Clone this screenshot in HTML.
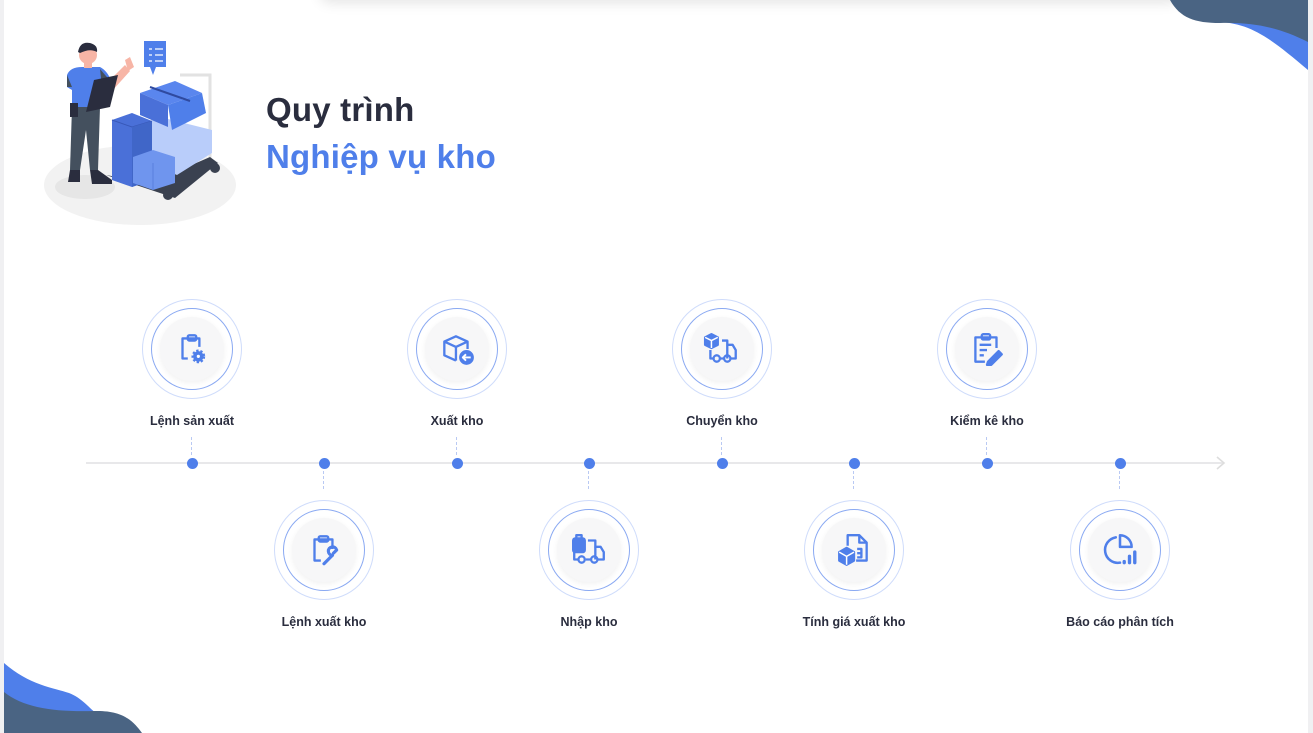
<!DOCTYPE html>
<html><head><meta charset="utf-8"><style>
html,body{margin:0;padding:0}
body{width:1313px;height:733px;position:relative;overflow:hidden;background:#fff;font-family:"Liberation Sans",sans-serif}
.edgeL{position:absolute;left:0;top:0;width:4px;height:733px;background:#f0f0f2}
.edgeR{position:absolute;right:0;top:0;width:5px;height:733px;background:#f0f0f2}
.topsh{position:absolute;left:320px;top:-20px;width:860px;height:20px;box-shadow:0 2px 14px rgba(0,0,0,.12);border-radius:10px}
.t1{position:absolute;left:266px;top:91px;font-size:33px;font-weight:bold;color:#2a2d3e;letter-spacing:0.2px}
.t2{position:absolute;left:266px;top:138px;font-size:33px;font-weight:bold;color:#4f7fea;letter-spacing:0.2px}
.node{position:absolute;width:100px;height:100px;margin-left:-50px;margin-top:-50px}
.node .o{position:absolute;left:0;top:0;width:98px;height:98px;border-radius:50%;border:1px solid #cfdcfb}
.node .m{position:absolute;left:9px;top:9px;width:80px;height:80px;border-radius:50%;border:1px solid #8aa9f2;background:#fff}
.node .i{position:absolute;left:18px;top:18px;width:64px;height:64px;border-radius:50%;background:#f7f7f8;box-shadow:0 2px 6px rgba(0,0,0,.06)}
.node svg{position:absolute;left:31px;top:31px;width:38px;height:38px}
.lbl{position:absolute;width:200px;margin-left:-100px;text-align:center;font-size:12.5px;font-weight:bold;color:#2a2d3e}
.dot{position:absolute;width:11px;height:11px;border-radius:50%;background:#4f7fea;margin-left:-5.5px;margin-top:-5.5px}
.dash{position:absolute;width:0;border-left:1px dashed #b9c9f3;height:18px}
</style></head><body>
<div class="edgeL"></div><div class="edgeR"></div><div class="topsh"></div>
<svg style="position:absolute;left:1160px;top:0" width="148" height="75" viewBox="0 0 148 75">
<path d="M55 22 C90 22 110 38 148 70 L148 0 L60 0 Z" fill="#4f7fea"/>
<path d="M10 0 C20 18 35 23 60 23 C95 22 120 28 148 42 L148 0 Z" fill="#4a6483"/>
</svg>
<svg style="position:absolute;left:4px;top:660px" width="145" height="73" viewBox="0 0 145 73">
<path d="M0 3 C25 25 50 28 65 33 C78 38 85 48 92 53 L0 73 Z" fill="#4f7fea"/>
<path d="M0 32 C20 48 50 52 90 51 C120 50 130 62 138 73 L0 73 Z" fill="#4a6483"/>
</svg>
<!-- illustration -->
<svg style="position:absolute;left:40px;top:35px" width="200" height="195" viewBox="0 0 200 195">
<ellipse cx="100" cy="150" rx="96" ry="40" fill="#f2f2f2"/>
<ellipse cx="45" cy="152" rx="30" ry="12" fill="#e6e6e6"/>
<path d="M140 40 h30 v88" stroke="#e2e2e2" stroke-width="3" fill="none"/>
<path d="M66 140 L135 163 L178 128 L170 122 L110 148 Z" fill="#3a4150"/>
<circle cx="128" cy="160" r="5" fill="#3a4150"/><circle cx="175" cy="133" r="5" fill="#3a4150"/>
<!-- boxes -->
<path d="M112 80 L172 95 L172 118 L137 140 L112 130 Z" fill="#b9cdfa"/>
<path d="M100 58 L135 46 L162 58 L128 70 Z" fill="#5a86ee"/>
<path d="M100 58 L128 70 L128 92 L100 80 Z" fill="#4a70d8"/>
<path d="M128 70 L162 58 L166 78 L132 95 Z" fill="#4f7fea"/>
<path d="M110 52 L150 66" stroke="#2f4aa0" stroke-width="2"/>
<path d="M72 85 L92 78 L112 86 L112 145 L92 152 L72 145 Z" fill="#4a70d8"/>
<path d="M72 85 L92 92 L112 86" stroke="#3858b8" stroke-width="1" fill="none"/>
<path d="M92 92 V152 L112 145 V86 Z" fill="#4066c8"/>
<path d="M93 122 L113 115 L135 122 L135 148 L113 155 L93 148 Z" fill="#6f95ee"/>
<path d="M113 128 V155" stroke="#5a80dd"/>
<rect x="104" y="6" width="22" height="26" fill="#4f7fea"/><path d="M110 32 L113 40 L116 32 Z" fill="#4f7fea"/>
<path d="M109 14 h3 M115 14 h8 M109 20 h3 M115 20 h8 M109 26 h3 M115 26 h8" stroke="#fff" stroke-width="1.2"/>
<!-- person -->
<path d="M32 72 L60 72 L58 135 L50 135 L46 95 L40 135 L30 135 Z" fill="#44505e"/>
<path d="M30 135 h10 v12 h-12z M50 135 h8 l14 10 v4 h-20z" fill="#2a2d3e"/>
<path d="M27 40 Q30 32 42 32 L60 32 Q68 36 72 48 L60 52 L60 72 L32 72 L32 55 L27 52 Z" fill="#4f7fea"/>
<path d="M27 40 L27 52 L32 52 Z M60 34 L72 48 L62 52 Z" fill="#44505e"/>
<circle cx="48" cy="20" r="9" fill="#f7b5a6"/><path d="M38 17 Q40 6 50 8 Q58 10 57 17 Q50 13 40 18 Z" fill="#2a2d3e"/>
<rect x="44" y="26" width="8" height="7" fill="#f7b5a6"/>
<path d="M65 50 L85 30 L90 36 L72 56 Z" fill="#f7b5a6"/><path d="M85 25 L90 22 L94 32 L88 36 Z" fill="#f7b5a6"/>
<path d="M54 45 L78 40 L70 72 L46 77 Z" fill="#2a2d3e"/>
<rect x="30" y="68" width="8" height="14" fill="#2a2d3e"/>
</svg>
<div class="t1">Quy trình</div>
<div class="t2">Nghiệp vụ kho</div>

<!-- timeline -->
<div style="position:absolute;left:86px;top:462px;width:1138px;height:2px;background:#e8e8ea"></div>
<svg style="position:absolute;left:1214px;top:455px" width="14" height="16"><path d="M3 2 L10 8 L3 14" stroke="#ddd" stroke-width="1.6" fill="none"/></svg>

<div class="dot" style="left:192px;top:463px"></div><div class="dot" style="left:324px;top:463px"></div><div class="dot" style="left:457px;top:463px"></div><div class="dot" style="left:589px;top:463px"></div><div class="dot" style="left:722px;top:463px"></div><div class="dot" style="left:854px;top:463px"></div><div class="dot" style="left:987px;top:463px"></div><div class="dot" style="left:1120px;top:463px"></div>
<div class="dash" style="left:191px;top:437px"></div><div class="dash" style="left:456px;top:437px"></div><div class="dash" style="left:721px;top:437px"></div><div class="dash" style="left:986px;top:437px"></div>
<div class="dash" style="left:323px;top:471px"></div><div class="dash" style="left:588px;top:471px"></div><div class="dash" style="left:853px;top:471px"></div><div class="dash" style="left:1119px;top:471px"></div>

<div class="node" style="left:192px;top:349px"><div class="o"></div><div class="m"></div><div class="i"></div>
<svg viewBox="0 0 36 36" fill="none" stroke="#4f7fea" stroke-width="2.2" stroke-linejoin="round"><path d="M14 27 H9 V8 H25 V16"/><rect x="14" y="5" width="8" height="5" rx="1.5"/><circle cx="24" cy="25" r="5" fill="#4f7fea" stroke-dasharray="2 1.6" stroke-width="3"/><circle cx="24" cy="25" r="1.5" fill="#fff" stroke="none"/></svg></div>
<div class="node" style="left:457px;top:349px"><div class="o"></div><div class="m"></div><div class="i"></div>
<svg viewBox="0 0 36 36" fill="none" stroke="#4f7fea" stroke-width="2.2" stroke-linejoin="round"><path d="M17 29 L6 24 V11 L17 6 L28 11 V18"/><path d="M6 11 L17 16 L28 11 M17 16 V29"/><circle cx="27" cy="26" r="7" fill="#4f7fea" stroke="none"/><path d="M31 26 H24 M26.5 23 L23.5 26 L26.5 29" stroke="#fff" stroke-width="1.8"/></svg></div>
<div class="node" style="left:722px;top:349px"><div class="o"></div><div class="m"></div><div class="i"></div>
<svg viewBox="0 0 36 36" fill="none" stroke="#4f7fea" stroke-width="2.2" stroke-linejoin="round"><path d="M7 19 V27 H10 M16 27 H20 M26 27 H31 V19 L28 14 H23 V10 H18"/><path d="M23 14 V27"/><circle cx="13" cy="27" r="3"/><circle cx="23" cy="27" r="3"/><path d="M2 7 L8 4 L14 7 V14 L8 17 L2 14 Z" fill="#4f7fea"/><path d="M2 7 L8 10 L14 7 M8 10 V17" stroke="#fff" stroke-width="1.4"/></svg></div>
<div class="node" style="left:987px;top:349px"><div class="o"></div><div class="m"></div><div class="i"></div>
<svg viewBox="0 0 36 36" fill="none" stroke="#4f7fea" stroke-width="2.2" stroke-linejoin="round"><path d="M16 30 H7 V7 H27 V17"/><rect x="13" y="4" width="8" height="5" rx="1.5"/><path d="M11 14 H22 M11 19 H18 M11 24 H15"/><path d="M19 30 L29 20 L32 23 L22 33 L18 33 Z" fill="#4f7fea"/></svg></div>
<div class="node" style="left:324px;top:550px"><div class="o"></div><div class="m"></div><div class="i"></div>
<svg viewBox="0 0 36 36" fill="none" stroke="#4f7fea" stroke-width="2.2" stroke-linejoin="round"><path d="M15 28 H9 V8 H26 V17"/><rect x="13" y="5" width="9" height="5" rx="1.5"/><path d="M18 31 L26 23 M26 23 A4 4 0 1 1 30 18 L27 21" stroke-width="3" stroke-linecap="round"/></svg></div>
<div class="node" style="left:589px;top:550px"><div class="o"></div><div class="m"></div><div class="i"></div>
<svg viewBox="0 0 36 36" fill="none" stroke="#4f7fea" stroke-width="2.2" stroke-linejoin="round"><path d="M4 20 V27 H8 M15 27 H20 M26 27 H32 V20 L29 15 H24 V9 H17"/><path d="M24 15 V27"/><circle cx="11" cy="27" r="3"/><circle cx="23" cy="27" r="3"/><rect x="3" y="7" width="11" height="13" rx="2" fill="#4f7fea"/><path d="M6 7 V4 H11 V7"/></svg></div>
<div class="node" style="left:854px;top:550px"><div class="o"></div><div class="m"></div><div class="i"></div>
<svg viewBox="0 0 36 36" fill="none" stroke="#4f7fea" stroke-width="2.2" stroke-linejoin="round"><path d="M12 14 V4 H23 L30 11 V28 H20"/><path d="M23 4 V11 H30"/><path d="M21 17 H25 V25 H21 M21 21 H25"/><path d="M4 20 L11 16 L18 20 V28 L11 32 L4 28 Z" fill="#4f7fea"/><path d="M4 20 L11 24 L18 20 M11 24 V32" stroke="#fff" stroke-width="1.4"/></svg></div>
<div class="node" style="left:1120px;top:550px"><div class="o"></div><div class="m"></div><div class="i"></div>
<svg viewBox="0 0 36 36" fill="none" stroke="#4f7fea" stroke-width="2.4" stroke-linejoin="round" stroke-linecap="round"><path d="M14 6 A12 12 0 1 0 18 30"/><path d="M18 4 V15 H29 A11 11 0 0 0 18 4 Z"/><path d="M22 29 V30 M27 24 V30 M32 20 V30" stroke-width="3.2"/></svg></div>

<div class="lbl" style="left:192px;top:414px">Lệnh sản xuất</div>
<div class="lbl" style="left:457px;top:414px">Xuất kho</div>
<div class="lbl" style="left:722px;top:414px">Chuyển kho</div>
<div class="lbl" style="left:987px;top:414px">Kiểm kê kho</div>
<div class="lbl" style="left:324px;top:615px">Lệnh xuất kho</div>
<div class="lbl" style="left:589px;top:615px">Nhập kho</div>
<div class="lbl" style="left:854px;top:615px">Tính giá xuất kho</div>
<div class="lbl" style="left:1120px;top:615px">Báo cáo phân tích</div>
</body></html>
